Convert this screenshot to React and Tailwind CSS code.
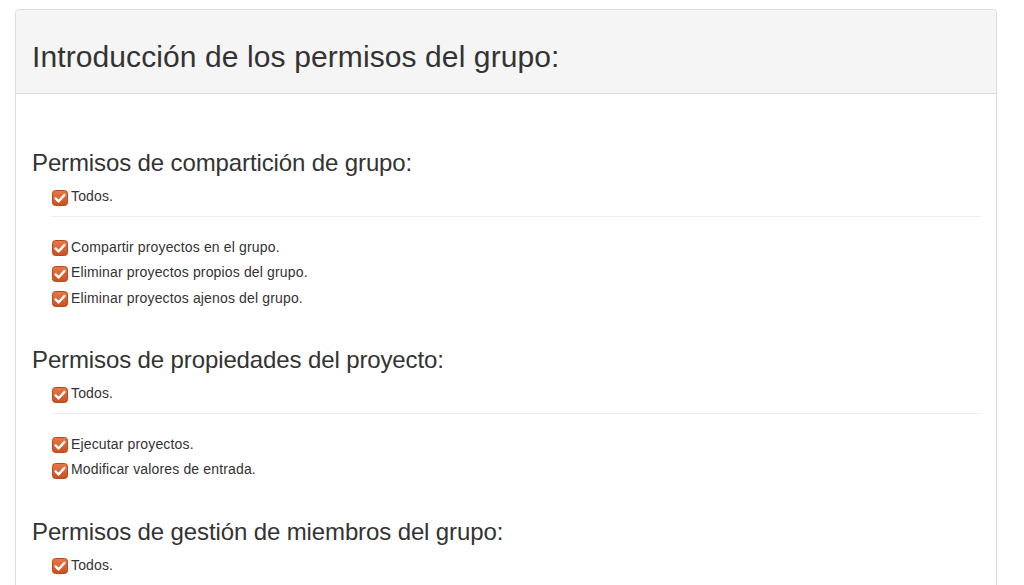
import React from 'react';

const sections = [
  {
    title: 'Permisos de compartición de grupo:',
    items: [
      'Compartir proyectos en el grupo.',
      'Eliminar proyectos propios del grupo.',
      'Eliminar proyectos ajenos del grupo.',
    ],
  },
  {
    title: 'Permisos de propiedades del proyecto:',
    items: ['Ejecutar proyectos.', 'Modificar valores de entrada.'],
  },
  {
    title: 'Permisos de gestión de miembros del grupo:',
    items: ['Añadir miembros.', 'Eliminar miembros.'],
  },
];

const CheckIcon = () => (
  <svg width="16" height="16" viewBox="0 0 16 16" className="shrink-0 mt-[3px]">
    <defs>
      <linearGradient id="chk" x1="0" y1="0" x2="0" y2="1">
        <stop offset="0" stopColor="#e8794a" />
        <stop offset="1" stopColor="#c8501f" />
      </linearGradient>
    </defs>
    <rect x="0.5" y="0.5" width="15" height="15" rx="3" fill="url(#chk)" stroke="#b84a1f" />
    <path d="M3.6 8.4 L6.6 11.4 L12.4 5" fill="none" stroke="#fff" strokeWidth="2.4" strokeLinecap="round" strokeLinejoin="round" />
  </svg>
);

const CheckRow = ({ label, tall }) => (
  <div className={`flex items-center gap-[3px] ${tall ? 'h-[25.5px]' : 'h-[20px]'}`}>
    <CheckIcon />
    <span className="text-[14px] leading-[20px] tracking-[0.15px] text-[#333]">{label}</span>
  </div>
);

const App = () => {
  return (
    <div className="w-[1024px] h-[585px] overflow-hidden bg-white font-['Liberation_Sans',Arial,sans-serif]">
      <div className="mt-[9px] ml-[15px] w-[982px] border border-[#ddd] rounded-[4px] min-h-[600px]">
        {/* Heading */}
        <div className="h-[84px] bg-[#f5f5f5] border-b border-[#ddd] rounded-t-[4px] pl-[16px] pt-[30px]">
          <h1 className="text-[30px] leading-[33px] tracking-[0.1px] text-[#333]">Introducción de los permisos del grupo:</h1>
        </div>

        {/* Body */}
        <div className="pl-[16px] pr-[15px] pt-[56px]">
          {sections.map((section, i) => (
            <div key={section.title} className={i > 0 ? 'mt-[36.5px]' : ''}>
              <h3 className="text-[24px] leading-[26px] tracking-[-0.12px] text-[#333]">{section.title}</h3>
              <div className="ml-[20px] mt-[10px]">
                <CheckRow label="Todos." />
                <div className="mt-[10px] mb-[17px] border-t border-[#eee]" />
                {section.items.map((item) => (
                  <CheckRow key={item} label={item} tall />
                ))}
              </div>
            </div>
          ))}
        </div>
      </div>
    </div>
  );
};

export default App;
